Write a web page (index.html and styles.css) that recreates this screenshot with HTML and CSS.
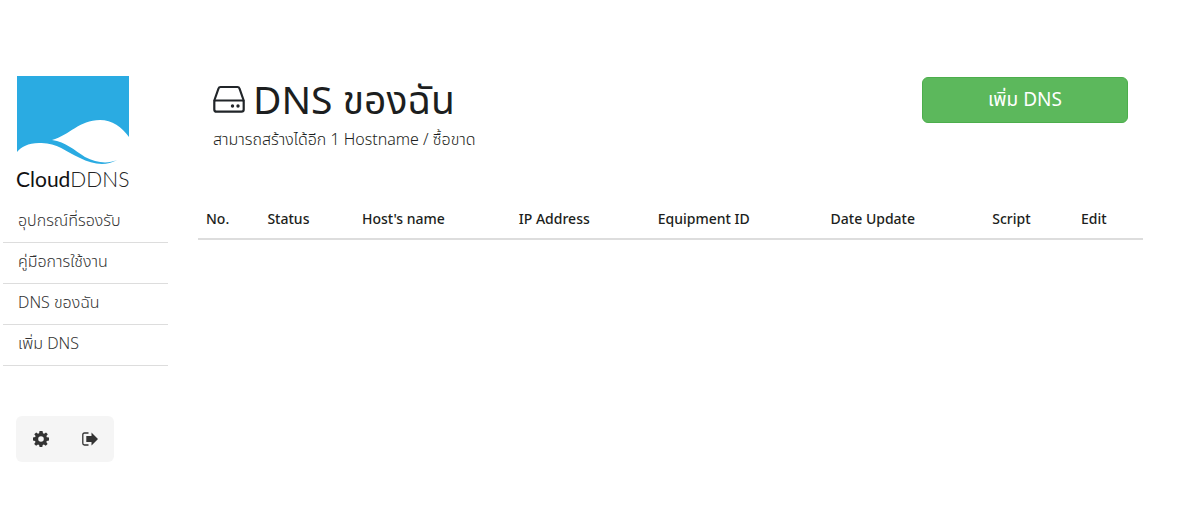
FILE: index.html
```html
<!DOCTYPE html>
<html lang="th">
<head>
<meta charset="utf-8">
<meta name="viewport" content="width=device-width, initial-scale=1">
<title>CloudDDNS</title>
<link rel="stylesheet" href="styles.css">
</head>
<body>
<div class="layout">
  <aside class="sidebar">
    <a class="brand" href="#">
      <svg class="brand-mark" viewBox="0 0 112 90" aria-hidden="true">
        <path fill="#2aabe2" d="M0 0H112V61C105 51 95 44 83 44C62 44 53 59 35 64C49 66 57 74 68 81C79 87 91 88 100 84C88 91 75 88 63 82C48 75 39 66 22 67C11 67 4 71 0 76Z"/>
      </svg>
      <svg class="brand-name" viewBox="0 0 112 20" role="img" aria-label="CloudDDNS">
        <text class="brand-text" x="-1" y="17">Cloud<tspan class="brand-soft">DDNS</tspan></text>
      </svg>
    </a>
    <nav class="menu">
      <a href="#">อุปกรณ์ที่รองรับ</a>
      <a href="#">คู่มือการใช้งาน</a>
      <a href="#">DNS ของฉัน</a>
      <a href="#">เพิ่ม DNS</a>
    </nav>
    <div class="tools">
      <button class="tool" type="button" aria-label="Settings">
        <svg class="tool-icon" viewBox="0 0 16 16" aria-hidden="true">
          <path fill="#333" fill-rule="evenodd" d="M6.500 0h3l.5 2.200 1.100.5L13 1.400 14.800 3.200 13.400 5.100l.4 1.100 2.200.4v3l-2.200.4-.5 1.100 1.300 1.900-1.900 1.800-1.800-1.300-1.200.5-.4 2H6.600l-.5-2-1.100-.5-1.900 1.300-1.900-1.900 1.300-1.800-.5-1.200L0 9.500v-3l2.200-.4.4-1.100L1.300 3.200 3.200 1.400 5 2.700l1.100-.5ZM8 5.200a2.800 2.800 0 1 0 0 5.600a2.800 2.800 0 1 0 0-5.600Z"/>
        </svg>
      </button>
      <button class="tool" type="button" aria-label="Log out">
        <svg class="tool-icon" viewBox="0 0 16 16" aria-hidden="true">
          <path fill="none" stroke="#333" stroke-width="1.300" d="M6.500 2H2.500Q.8 2 .8 3.700V12.300Q.8 14 2.500 14H6.500"/>
          <path fill="#333" d="M4.300 5H9.500V1.600L16 8L9.500 14.400V11H4.300Z"/>
        </svg>
      </button>
    </div>
  </aside>
  <main class="main">
    <header class="header">
      <div>
        <h1 class="title">
          <svg class="drive" viewBox="0 0 32 28" aria-hidden="true">
            <g fill="none" stroke="#212529" stroke-width="2.200" stroke-linejoin="round">
              <path d="M7.500 2H24.500Q26 2 26.500 3.500L30.700 15.500V24.500Q30.700 26.700 28.500 26.700H3.500Q1.300 26.700 1.300 24.500V15.500L5.500 3.500Q6 2 7.500 2Z"/>
              <path d="M1.300 16Q1.500 15.500 3 15.500H29Q30.500 15.500 30.700 16"/>
            </g>
            <circle cx="19.500" cy="21" r="1.700" fill="#212529"/>
            <circle cx="25" cy="21" r="1.700" fill="#212529"/>
          </svg>
          <span>DNS ของฉัน</span>
        </h1>
        <p class="subtitle">สามารถสร้างได้อีก 1 Hostname / ซื้อขาด</p>
      </div>
      <button class="add" type="button">เพิ่ม DNS</button>
    </header>
    <table class="hosts">
      <colgroup>
        <col class="c-no"><col class="c-status"><col class="c-host"><col class="c-ip">
        <col class="c-equip"><col class="c-date"><col class="c-script"><col class="c-edit">
      </colgroup>
      <thead>
        <tr>
          <th scope="col">No.</th>
          <th scope="col">Status</th>
          <th scope="col">Host's name</th>
          <th scope="col">IP Address</th>
          <th scope="col">Equipment ID</th>
          <th scope="col">Date Update</th>
          <th scope="col">Script</th>
          <th scope="col">Edit</th>
        </tr>
      </thead>
      <tbody></tbody>
    </table>
  </main>
</div>
</body>
</html>
```
FILE: styles.css
```css
* { box-sizing: border-box; }
body {
  margin: 0;
  background: #fff;
  color: #1c1e20;
  font-family: "Noto Sans", "Noto Sans Thai", sans-serif;
  font-size: 16px;
  font-weight: 300;
  line-height: 24px;
}
button { font: inherit; cursor: pointer; }
.layout {
  display: grid;
  grid-template-columns: 165px minmax(0, 1fr);
  column-gap: 30px;
  padding: 76px 40px 48px 3px;
}
.brand { display: block; width: 112px; margin-left: 14px; }
.brand-mark, .brand-name { display: block; width: 100%; }
.brand-name { margin-top: 4px; overflow: visible; }
.brand-text { font-family: Lato, sans-serif; font-size: 21px; font-weight: 400; fill: #111; }
.brand-soft { fill: #222; font-weight: 300; }
.menu { display: flex; flex-direction: column; margin-top: 12px; }
.menu a {
  padding: 6px 15px 10px;
  border-bottom: 1px solid #ddd;
  color: #333;
  text-decoration: none;
}
.tools {
  display: inline-flex;
  margin: 50px 0 0 13px;
  border-radius: 6px;
  background: #f5f5f5;
}
.tool {
  display: flex;
  align-items: center;
  justify-content: center;
  width: 49px;
  height: 46px;
  padding: 0;
  border: 0;
  background: none;
}
.tool-icon { width: 16px; height: 16px; }
.header {
  display: flex;
  justify-content: space-between;
  align-items: flex-start;
  padding: 0 15px;
}
.title {
  display: flex;
  align-items: center;
  gap: 8px;
  margin: 0;
  font-size: 39px;
  font-weight: 400;
  line-height: 46px;
}
.drive { width: 32px; height: 28px; }
.subtitle { margin: 5px 0 0; }
.add {
  width: 206px;
  height: 46px;
  margin-top: 1px;
  padding: 0 0 3px;
  border: 1px solid #4cae4c;
  border-radius: 6px;
  background: #5cb85c;
  color: #fff;
  font-size: 19px;
  font-weight: 400;
}
.hosts {
  width: 100%;
  margin-top: 47px;
  border-collapse: collapse;
  table-layout: fixed;
}
.hosts th {
  padding: 9px 8px 7px;
  border-bottom: 2px solid #ddd;
  font-size: 14px;
  font-weight: 500;
  text-align: left;
  white-space: nowrap;
}
.c-no { width: 6.5%; }
.c-status { width: 10%; }
.c-host { width: 16.6%; }
.c-ip { width: 14.7%; }
.c-equip { width: 18.3%; }
.c-date { width: 17.1%; }
.c-script { width: 9.4%; }
.c-edit { width: 7.4%; }
```
